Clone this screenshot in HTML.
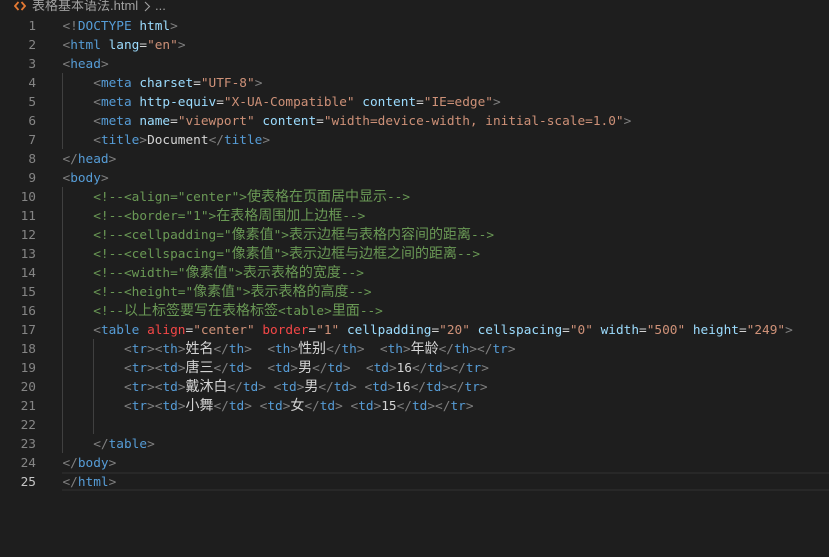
<!DOCTYPE html>
<html lang="zh">
<head>
<meta charset="utf-8">
<style>
html,body{margin:0;padding:0;width:829px;height:557px;overflow:hidden;background:#1e1e1e}
#bc{position:absolute;left:32px;top:-2px;height:16px;font:13px/16px "Liberation Sans","Noto Sans CJK SC",sans-serif;color:#a0a0a0;white-space:pre}
.n{position:absolute;left:0;width:36px;margin-top:1px;text-align:right;height:19px;color:#858585;font:12.77px/19px "DejaVu Sans Mono",monospace}
.l{position:absolute;left:62.5px;margin-top:1px;height:19px;white-space:pre;font:12.77px/19px "DejaVu Sans Mono","WenQuanYi Zen Hei",monospace;color:#d4d4d4}
.l i{font-style:normal;font-family:"WenQuanYi Zen Hei","Noto Sans CJK SC",sans-serif;font-size:14px;letter-spacing:0;line-height:0}
b{font-weight:normal}
.g{color:#808080}.t{color:#569cd6}.a{color:#9cdcfe}.s{color:#ce9178}.c{color:#6a9955}.r{color:#f44747}
.gd{position:absolute;width:1px;background:#404040}
</style>
</head>
<body>
<svg style="position:absolute;left:14px;top:1px" width="12" height="10" viewBox="0 0 12 10"><path d="M4.5 1 L1 5 L4.5 9 M7.5 1 L11 5 L7.5 9" fill="none" stroke="#e37933" stroke-width="1.8"/></svg>
<div id="bc">表格基本语法.html</div>
<svg style="position:absolute;left:143px;top:1px" width="8" height="11" viewBox="0 0 8 11"><path d="M2 1 L6.5 5.5 L2 10" fill="none" stroke="#a0a0a0" stroke-width="1.1"/></svg>
<div style="position:absolute;left:155px;top:-2px;font:13px/16px 'Liberation Sans',sans-serif;color:#a0a0a0">...</div>

<div style="position:absolute;left:62px;top:472px;width:767px;height:15px;border-top:2px solid #282828;border-bottom:2px solid #282828"></div>
<div class="gd" style="left:62px;top:73px;height:76px"></div>
<div class="gd" style="left:62px;top:187px;height:266px"></div>
<div class="gd" style="left:93px;top:339px;height:95px"></div>

<div class="n" style="top:16px">1</div>
<div class="n" style="top:35px">2</div>
<div class="n" style="top:54px">3</div>
<div class="n" style="top:73px">4</div>
<div class="n" style="top:92px">5</div>
<div class="n" style="top:111px">6</div>
<div class="n" style="top:130px">7</div>
<div class="n" style="top:149px">8</div>
<div class="n" style="top:168px">9</div>
<div class="n" style="top:187px">10</div>
<div class="n" style="top:206px">11</div>
<div class="n" style="top:225px">12</div>
<div class="n" style="top:244px">13</div>
<div class="n" style="top:263px">14</div>
<div class="n" style="top:282px">15</div>
<div class="n" style="top:301px">16</div>
<div class="n" style="top:320px">17</div>
<div class="n" style="top:339px">18</div>
<div class="n" style="top:358px">19</div>
<div class="n" style="top:377px">20</div>
<div class="n" style="top:396px">21</div>
<div class="n" style="top:415px">22</div>
<div class="n" style="top:434px">23</div>
<div class="n" style="top:453px">24</div>
<div class="n" style="top:472px;color:#c6c6c6">25</div>

<div class="l" style="top:16px"><b class="g">&lt;!</b><b class="t">DOCTYPE</b> <b class="a">html</b><b class="g">&gt;</b></div>
<div class="l" style="top:35px"><b class="g">&lt;</b><b class="t">html</b> <b class="a">lang</b>=<b class="s">"en"</b><b class="g">&gt;</b></div>
<div class="l" style="top:54px"><b class="g">&lt;</b><b class="t">head</b><b class="g">&gt;</b></div>
<div class="l" style="top:73px">    <b class="g">&lt;</b><b class="t">meta</b> <b class="a">charset</b>=<b class="s">"UTF-8"</b><b class="g">&gt;</b></div>
<div class="l" style="top:92px">    <b class="g">&lt;</b><b class="t">meta</b> <b class="a">http-equiv</b>=<b class="s">"X-UA-Compatible"</b> <b class="a">content</b>=<b class="s">"IE=edge"</b><b class="g">&gt;</b></div>
<div class="l" style="top:111px">    <b class="g">&lt;</b><b class="t">meta</b> <b class="a">name</b>=<b class="s">"viewport"</b> <b class="a">content</b>=<b class="s">"width=device-width, initial-scale=1.0"</b><b class="g">&gt;</b></div>
<div class="l" style="top:130px">    <b class="g">&lt;</b><b class="t">title</b><b class="g">&gt;</b>Document<b class="g">&lt;/</b><b class="t">title</b><b class="g">&gt;</b></div>
<div class="l" style="top:149px"><b class="g">&lt;/</b><b class="t">head</b><b class="g">&gt;</b></div>
<div class="l" style="top:168px"><b class="g">&lt;</b><b class="t">body</b><b class="g">&gt;</b></div>
<div class="l c" style="top:187px">    &lt;!--&lt;align="center"&gt;<i>使表格在页面居中显示</i>--&gt;</div>
<div class="l c" style="top:206px">    &lt;!--&lt;border="1"&gt;<i>在表格周围加上边框</i>--&gt;</div>
<div class="l c" style="top:225px">    &lt;!--&lt;cellpadding="<i>像素值</i>"&gt;<i>表示边框与表格内容间的距离</i>--&gt;</div>
<div class="l c" style="top:244px">    &lt;!--&lt;cellspacing="<i>像素值</i>"&gt;<i>表示边框与边框之间的距离</i>--&gt;</div>
<div class="l c" style="top:263px">    &lt;!--&lt;width="<i>像素值</i>"&gt;<i>表示表格的宽度</i>--&gt;</div>
<div class="l c" style="top:282px">    &lt;!--&lt;height="<i>像素值</i>"&gt;<i>表示表格的高度</i>--&gt;</div>
<div class="l c" style="top:301px">    &lt;!--<i>以上标签要写在表格标签</i>&lt;table&gt;<i>里面</i>--&gt;</div>
<div class="l" style="top:320px">    <b class="g">&lt;</b><b class="t">table</b> <b class="r">align</b>=<b class="s">"center"</b> <b class="r">border</b>=<b class="s">"1"</b> <b class="a">cellpadding</b>=<b class="s">"20"</b> <b class="a">cellspacing</b>=<b class="s">"0"</b> <b class="a">width</b>=<b class="s">"500"</b> <b class="a">height</b>=<b class="s">"249"</b><b class="g">&gt;</b></div>
<div class="l" style="top:339px">        <b class="g">&lt;</b><b class="t">tr</b><b class="g">&gt;&lt;</b><b class="t">th</b><b class="g">&gt;</b><i>姓名</i><b class="g">&lt;/</b><b class="t">th</b><b class="g">&gt;</b>  <b class="g">&lt;</b><b class="t">th</b><b class="g">&gt;</b><i>性别</i><b class="g">&lt;/</b><b class="t">th</b><b class="g">&gt;</b>  <b class="g">&lt;</b><b class="t">th</b><b class="g">&gt;</b><i>年龄</i><b class="g">&lt;/</b><b class="t">th</b><b class="g">&gt;&lt;/</b><b class="t">tr</b><b class="g">&gt;</b></div>
<div class="l" style="top:358px">        <b class="g">&lt;</b><b class="t">tr</b><b class="g">&gt;&lt;</b><b class="t">td</b><b class="g">&gt;</b><i>唐三</i><b class="g">&lt;/</b><b class="t">td</b><b class="g">&gt;</b>  <b class="g">&lt;</b><b class="t">td</b><b class="g">&gt;</b><i>男</i><b class="g">&lt;/</b><b class="t">td</b><b class="g">&gt;</b>  <b class="g">&lt;</b><b class="t">td</b><b class="g">&gt;</b>16<b class="g">&lt;/</b><b class="t">td</b><b class="g">&gt;&lt;/</b><b class="t">tr</b><b class="g">&gt;</b></div>
<div class="l" style="top:377px">        <b class="g">&lt;</b><b class="t">tr</b><b class="g">&gt;&lt;</b><b class="t">td</b><b class="g">&gt;</b><i>戴沐白</i><b class="g">&lt;/</b><b class="t">td</b><b class="g">&gt;</b> <b class="g">&lt;</b><b class="t">td</b><b class="g">&gt;</b><i>男</i><b class="g">&lt;/</b><b class="t">td</b><b class="g">&gt;</b> <b class="g">&lt;</b><b class="t">td</b><b class="g">&gt;</b>16<b class="g">&lt;/</b><b class="t">td</b><b class="g">&gt;&lt;/</b><b class="t">tr</b><b class="g">&gt;</b></div>
<div class="l" style="top:396px">        <b class="g">&lt;</b><b class="t">tr</b><b class="g">&gt;&lt;</b><b class="t">td</b><b class="g">&gt;</b><i>小舞</i><b class="g">&lt;/</b><b class="t">td</b><b class="g">&gt;</b> <b class="g">&lt;</b><b class="t">td</b><b class="g">&gt;</b><i>女</i><b class="g">&lt;/</b><b class="t">td</b><b class="g">&gt;</b> <b class="g">&lt;</b><b class="t">td</b><b class="g">&gt;</b>15<b class="g">&lt;/</b><b class="t">td</b><b class="g">&gt;&lt;/</b><b class="t">tr</b><b class="g">&gt;</b></div>
<div class="l" style="top:434px">    <b class="g">&lt;/</b><b class="t">table</b><b class="g">&gt;</b></div>
<div class="l" style="top:453px"><b class="g">&lt;/</b><b class="t">body</b><b class="g">&gt;</b></div>
<div class="l" style="top:472px"><b class="g">&lt;/</b><b class="t">html</b><b class="g">&gt;</b></div>
</body>
</html>
